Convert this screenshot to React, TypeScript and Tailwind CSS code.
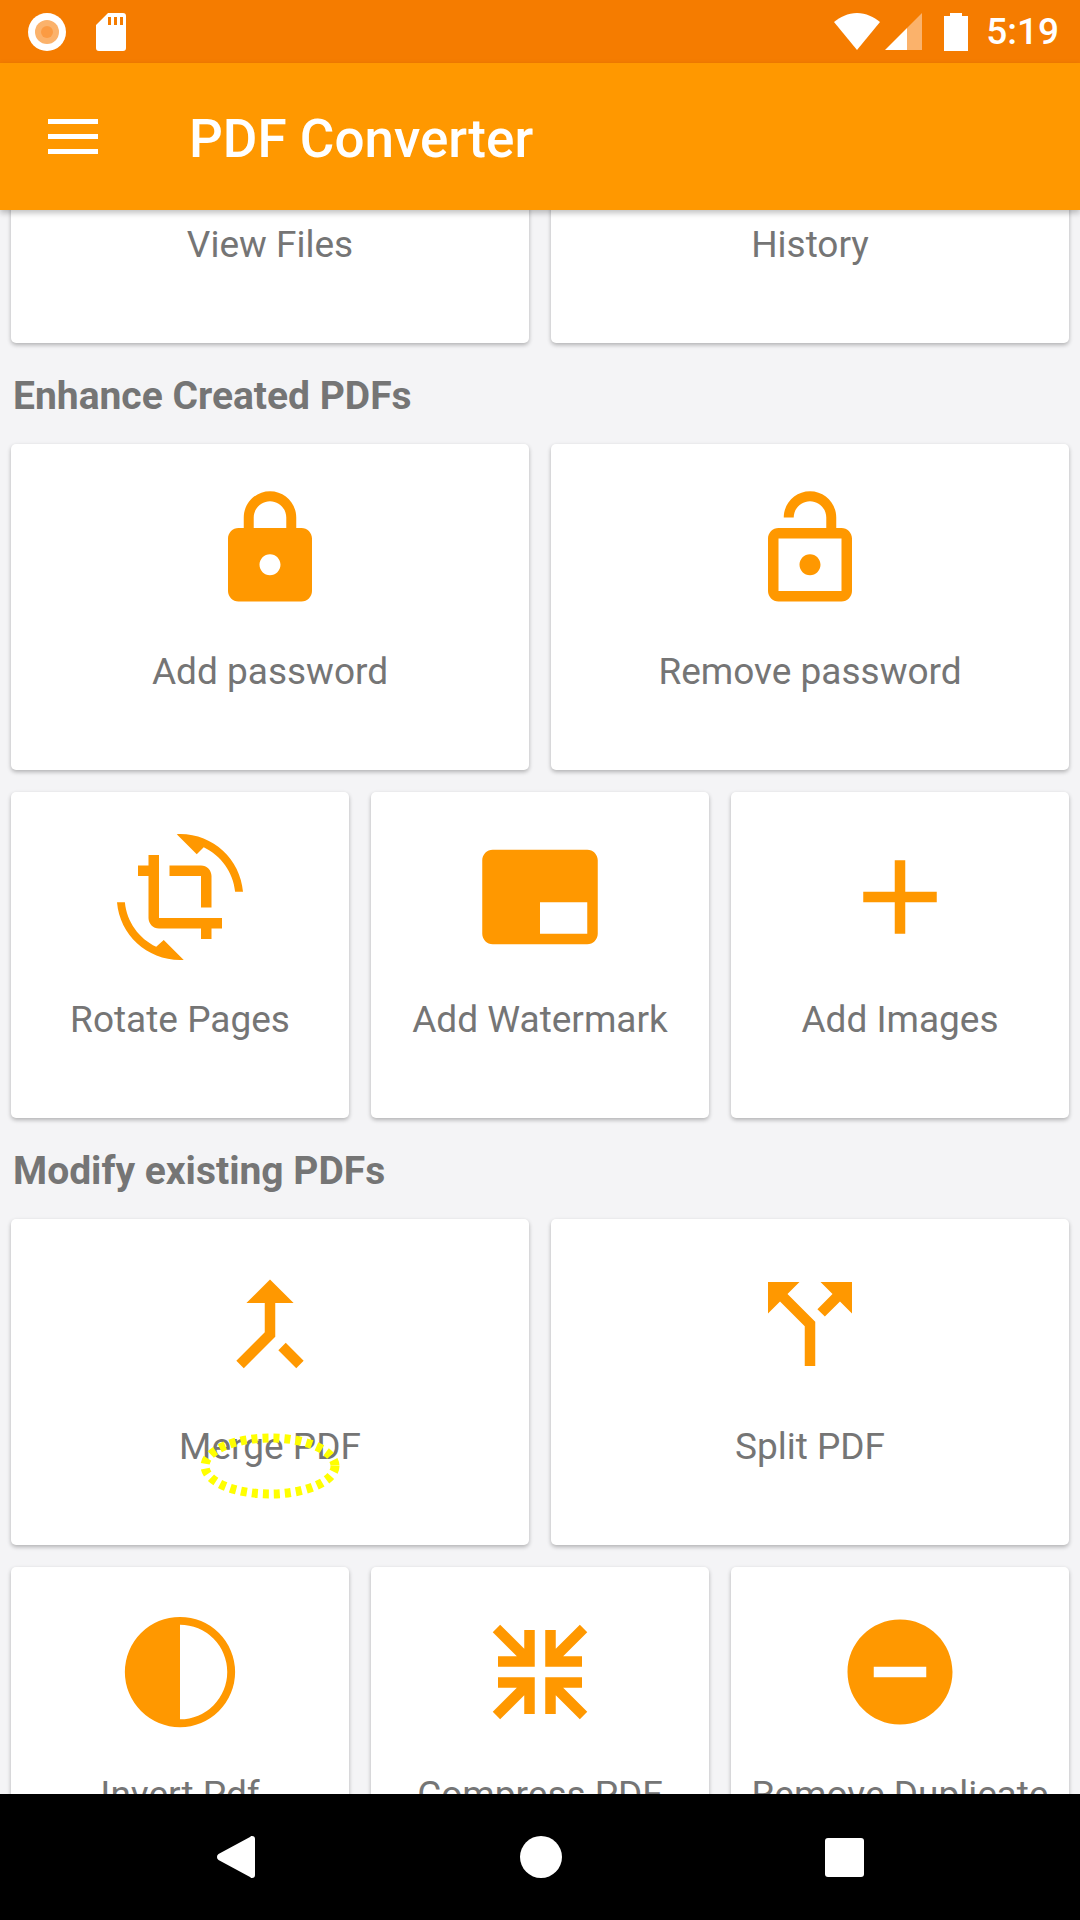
const ICONS: Record<string, string> = {
  lock: 'M18 8h-1V6c0-2.76-2.24-5-5-5S7 3.24 7 6v2H6c-1.1 0-2 .9-2 2v10c0 1.1.9 2 2 2h12c1.1 0 2-.9 2-2V10c0-1.1-.9-2-2-2zm-6 9c-1.1 0-2-.9-2-2s.9-2 2-2 2 .9 2 2-.9 2-2 2zm3.1-9H8.9V6c0-1.71 1.39-3.1 3.1-3.1 1.71 0 3.1 1.39 3.1 3.1v2z',
  unlock: 'M12 17c1.1 0 2-.9 2-2s-.9-2-2-2-2 .9-2 2 .9 2 2 2zm6-9h-1V6c0-2.76-2.24-5-5-5S7 3.24 7 6h1.9c0-1.71 1.39-3.1 3.1-3.1 1.71 0 3.1 1.39 3.1 3.1v2H6c-1.1 0-2 .9-2 2v10c0 1.1.9 2 2 2h12c1.1 0 2-.9 2-2V10c0-1.1-.9-2-2-2zm0 12H6V10h12v10z',
  rotate: 'M7.47 21.49C4.2 19.93 1.86 16.76 1.5 13H0c.51 6.16 5.66 11 12.04 11 .23 0 .45-.01.67-.02l-3.81-3.81-1.43 1.32zM12.05 0c-.23 0-.45.01-.67.03l3.81 3.81 1.33-1.33C19.8 4.07 22.14 7.24 22.5 11H24c-.51-6.16-5.66-11-11.95-11zM16 14h2V8c0-1.11-.9-2-2-2h-6v2h6v6zm-8 2V4H6v2H4v2h2v8c0 1.1.89 2 2 2h8v2h2v-2h2v-2H8z',
  watermark: 'M21 3H3c-1.1 0-2 .9-2 2v14c0 1.1.9 2 2 2h18c1.1 0 2-.9 2-2V5c0-1.1-.9-2-2-2zm0 16h-9v-6h9v6z',
  add: 'M19 13h-6v6h-2v-6H5v-2h6V5h2v6h6v2z',
  merge: 'M17 20.41L18.41 19 15 15.59 13.59 17 17 20.41zM7.5 8H11v5.59L5.59 19 7 20.41l6-6V8h3.5L12 3.5 7.5 8z',
  split: 'M14 4l2.29 2.29-2.88 2.88 1.42 1.42 2.88-2.88L20 10V4zm-4 0H4v6l2.29-2.29 4.71 4.7V20h2v-8.41l-5.29-5.3z',
  invert: 'M12 1.5a10.5 10.5 0 1 0 0 21 10.5 10.5 0 0 0 0-21zM12 3a9 9 0 0 1 0 18z',
  compress: 'M3 4.41L4.41 3 9 7.59V4h2v7H4V9h3.59zM21 4.41L19.59 3 15 7.59V4h-2v7h7V9h-3.59zM3 19.59L4.41 21 9 16.41V20h2v-7H4v2h3.59zM21 19.59L19.59 21 15 16.41V20h-2v-7h7v2h-3.59z',
  minus: 'M12 2C6.48 2 2 6.48 2 12s4.48 10 10 10 10-4.48 10-10S17.52 2 12 2zm5 11H7v-2h10v2z',
};

const Icon = ({ name }: { name: string }) => (
  <svg viewBox="0 0 24 24" className="h-[126px] w-[126px] shrink-0 fill-[#ff9800]">
    <path d={ICONS[name]} fillRule="evenodd" />
  </svg>
);

const Card = ({ icon, label }: { icon: string; label: string }) => (
  <div className="flex h-[326px] flex-col items-center rounded-[5px] bg-white pt-[42px] shadow-[0_2px_4px_rgba(0,0,0,0.28)]">
    <Icon name={icon} />
    <span className="mt-[39px] whitespace-nowrap text-[37px] leading-[42px] text-[#757575]">{label}</span>
  </div>
);

const SectionTitle = ({ children }: { children: string }) => (
  <h2 className="mx-[2px] flex h-[53px] items-center text-[39px] font-bold leading-[42px] text-[#757575]">{children}</h2>
);

const StatusBar = () => (
  <div className="flex h-[63px] shrink-0 items-center bg-[#f57c00] pl-[28px] pr-[21px] text-white">
    <svg viewBox="0 0 38 38" className="h-[38px] w-[38px]">
      <circle cx="19" cy="19" r="19" fill="#fff" />
      <circle cx="19" cy="19" r="12" fill="#fbb26b" />
      <circle cx="19" cy="19" r="6" fill="#fb9b43" />
    </svg>
    <svg viewBox="0 0 30 38" className="ml-[30px] h-[38px] w-[30px]">
      <path
        d="M12 0h15a3 3 0 0 1 3 3v32a3 3 0 0 1-3 3H3a3 3 0 0 1-3-3V12zM12 4v8h3V4zM18 4v8h3V4zM24 4v8h3V4z"
        fill="#fff"
        fillRule="evenodd"
      />
    </svg>
    <div className="flex-1" />
    <svg viewBox="0 0 46 38" className="h-[38px] w-[46px]">
      <path d="M0 9C6 4 14 0 23 0s17 4 23 9L23 37z" fill="#fff" />
    </svg>
    <svg viewBox="0 0 37 37" className="ml-[5px] h-[37px] w-[37px]">
      <path d="M37 0v37H22V15z" fill="#fbb26b" />
      <path d="M22 15v22H0z" fill="#fff" />
    </svg>
    <svg viewBox="0 0 24 38" className="ml-[22px] h-[38px] w-[24px]">
      <path d="M6 0h12v3h6v35H0V3h6z" fill="#fff" />
    </svg>
    <span className="ml-[18px] text-[37px] font-medium leading-[42px]">5:19</span>
  </div>
);

const Toolbar = () => (
  <header className="relative z-10 flex h-[147px] shrink-0 items-center bg-[#ff9800] shadow-[0_3px_6px_rgba(0,0,0,0.25)]">
    <div className="ml-[48px] flex w-[50px] flex-col gap-[10px]">
      <span className="h-[5px] bg-white" />
      <span className="h-[5px] bg-white" />
      <span className="h-[5px] bg-white" />
    </div>
    <h1 className="ml-[91px] pt-[4px] text-[53px] font-medium leading-[60px] text-white">PDF Converter</h1>
  </header>
);

const NavBar = () => (
  <nav className="relative z-10 flex h-[126px] shrink-0 items-center bg-black">
    <div className="flex w-full items-center">
      <svg viewBox="0 0 38 42" className="ml-[217px] h-[42px] w-[38px]">
        <path d="M35 0c2 0 3 1 3 3v36c0 2-1 3-3 3-1 0-1.500-.5-2-1L1.500 24c-2-1.500-2-4.500 0-6L33 1c.5-.5 1-1 2-1z" fill="#fff" />
      </svg>
      <span className="ml-[265px] h-[42px] w-[42px] rounded-full bg-white" />
      <span className="ml-[263px] h-[39px] w-[39px] rounded-[3px] bg-white" />
    </div>
  </nav>
);

export default function App() {
  return (
    <div className="flex h-[1920px] w-[1080px] flex-col overflow-hidden bg-[#f4f4f6] font-['Roboto',sans-serif]">
      <StatusBar />
      <Toolbar />
      <main className="relative flex min-h-0 flex-1 flex-col overflow-hidden px-[11px]">
        <div className="-mt-[193px] grid shrink-0 grid-cols-2 gap-[22px]">
          <Card icon="add" label="View Files" />
          <Card icon="add" label="History" />
        </div>
        <div className="mt-[26px] shrink-0">
          <SectionTitle>Enhance Created PDFs</SectionTitle>
        </div>
        <div className="mt-[22px] grid shrink-0 grid-cols-2 gap-[22px]">
          <Card icon="lock" label="Add password" />
          <Card icon="unlock" label="Remove password" />
        </div>
        <div className="mt-[22px] grid shrink-0 grid-cols-3 gap-[22px]">
          <Card icon="rotate" label="Rotate Pages" />
          <Card icon="watermark" label="Add Watermark" />
          <Card icon="add" label="Add Images" />
        </div>
        <div className="mt-[26px] shrink-0">
          <SectionTitle>Modify existing PDFs</SectionTitle>
        </div>
        <div className="relative mt-[22px] grid shrink-0 grid-cols-2 gap-[22px]">
          <Card icon="merge" label="Merge PDF" />
          <Card icon="split" label="Split PDF" />
          <svg viewBox="0 0 140 66" className="absolute left-[189px] top-[214px] h-[66px] w-[140px]">
            <ellipse cx="70" cy="33" rx="65" ry="28" fill="none" stroke="#ffff00" strokeWidth="9" strokeDasharray="6 5" />
          </svg>
        </div>
        <div className="mt-[22px] grid shrink-0 grid-cols-3 gap-[22px]">
          <Card icon="invert" label="Invert Pdf" />
          <Card icon="compress" label="Compress PDF" />
          <Card icon="minus" label="Remove Duplicate" />
        </div>
      </main>
      <NavBar />
    </div>
  );
}
